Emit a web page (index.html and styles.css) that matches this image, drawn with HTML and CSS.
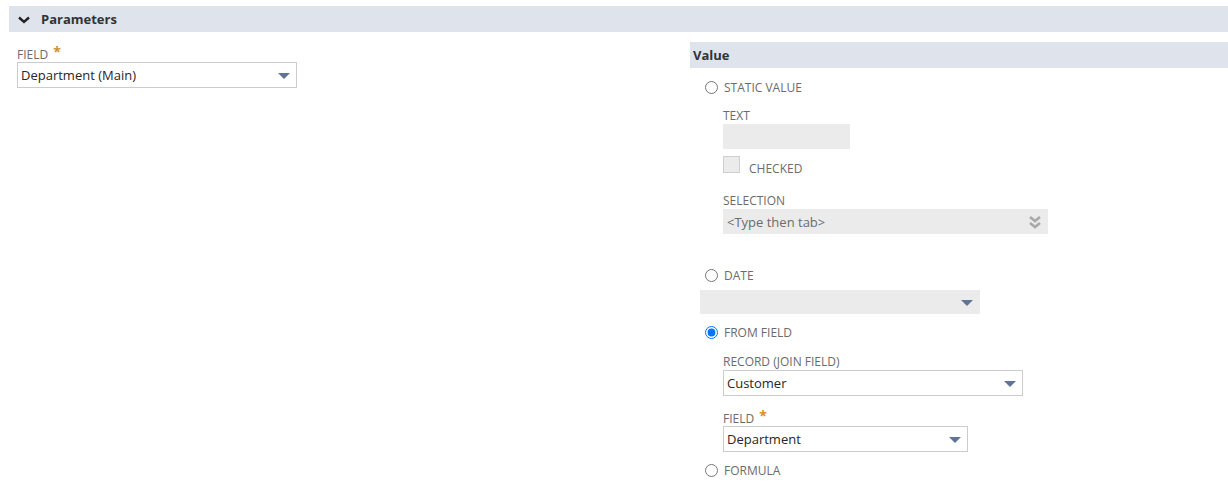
FILE: index.html
```html
<!DOCTYPE html>
<html>
<head>
<meta charset="utf-8">
<link rel="stylesheet" href="styles.css">
</head>
<body>
<div class="section-head">
  <svg class="chev" width="14" height="10" viewBox="0 0 14 10"><polyline points="2,2.5 7,7 12,2.5" fill="none" stroke="#222" stroke-width="2.4"/></svg>
  <span>Parameters</span>
</div>
<div class="content">
  <div class="left">
    <div class="label lbl-first">FIELD <span class="req">*</span></div>
    <div class="select sel-main"><span>Department (Main)</span><i class="tri"></i></div>
  </div>
  <div class="right">
    <div class="value-head">Value</div>

    <label class="radio-row r-static"><input type="radio" name="v"><span>STATIC VALUE</span></label>
    <div class="sub">
      <div class="label l-text">TEXT</div>
      <div class="box text-box"></div>
      <div class="check-row"><span class="checkbox"></span><span class="check-label">CHECKED</span></div>
      <div class="label l-sel">SELECTION</div>
      <div class="box sel-box"><span class="ph">&lt;Type then tab&gt;</span>
        <svg width="14" height="16" viewBox="0 0 14 16"><polyline points="2,3 7,7 12,3" fill="none" stroke="#a9a9a9" stroke-width="2.6"/><polyline points="2,9 7,13 12,9" fill="none" stroke="#a9a9a9" stroke-width="2.6"/></svg>
      </div>
    </div>

    <label class="radio-row r-date"><input type="radio" name="v"><span>DATE</span></label>
    <div class="box date-box"><i class="tri"></i></div>

    <label class="radio-row r-from"><input type="radio" name="v" checked><span>FROM FIELD</span></label>
    <div class="sub">
      <div class="label l-rec">RECORD (JOIN FIELD)</div>
      <div class="select sel-rec"><span>Customer</span><i class="tri"></i></div>
      <div class="label l-fld">FIELD <span class="req">*</span></div>
      <div class="select sel-fld"><span>Department</span><i class="tri"></i></div>
    </div>

    <label class="radio-row r-formula"><input type="radio" name="v"><span>FORMULA</span></label>
  </div>
</div>
</body>
</html>
```

FILE: styles.css
```css
* { box-sizing: border-box; }
body {
  margin: 0;
  font-family: "Open Sans", "Liberation Sans", sans-serif;
  color: #262626;
  background: #fff;
}
.section-head {
  margin: 6px 0 0 9px;
  height: 26px;
  background: #dfe3eb;
  display: flex;
  align-items: center;
  font-size: 13px;
  font-weight: 700;
  color: #333;
}
.chev { margin-left: 8px; margin-right: 10px; margin-top: 1px; }
.content { display: flex; }
.left { width: 690px; padding-left: 17px; }
.right { flex: 1; }
.label {
  font-size: 12px;
  line-height: 16px;
  height: 16px;
  padding-top: 1px;
  color: #6b6b6b;
}
.req { color: #d0902a; font-weight: 700; font-size: 14px; position: relative; top: -2px; margin-left: 2px; }
.lbl-first { margin-top: 13px; }
.select {
  height: 26px;
  border: 1px solid #cccccc;
  background: #fff;
  display: flex;
  align-items: center;
  justify-content: space-between;
  padding: 0 6px 0 3px;
  font-size: 13px;
  color: #262626;
  margin-top: 1px;
}
.tri {
  width: 0; height: 0;
  border-left: 6px solid transparent;
  border-right: 6px solid transparent;
  border-top: 6px solid #607594;
  margin-top: 1px;
}
.sel-main { width: 280px; }
.value-head {
  margin-top: 10px;
  height: 26px;
  background: #dfe3eb;
  font-size: 13px;
  font-weight: 700;
  color: #333;
  line-height: 26px;
  padding-left: 3px;
}
.radio-row {
  display: flex;
  align-items: center;
  height: 18px;
  padding-left: 15px;
  font-size: 12px;
  color: #6b6b6b;
}
.radio-row span { padding-top: 1px; }
.radio-row input { margin: 0 6px 0 0; width: 13px; height: 13px; }
.r-static { margin-top: 10px; }
.r-date { margin-top: 32px; }
.r-from { margin-top: 9px; }
.r-formula { margin-top: 9px; }
.sub { padding-left: 33px; }
.l-text { margin-top: 11px; }
.box { background: #ebebeb; margin-top: 1px; }
.text-box { width: 127px; height: 25px; }
.check-row { display: flex; margin-top: 7px; height: 17px; }
.checkbox { width: 17px; height: 17px; background: #ebebeb; border: 1px solid #cfcfcf; }
.check-label { font-size: 12px; line-height: 16px; color: #6b6b6b; margin-left: 9px; margin-top: 5px; }
.l-sel { margin-top: 19px; }
.sel-box {
  width: 325px; height: 25px;
  display: flex; align-items: center; justify-content: space-between;
  padding: 0 6px 0 4px;
}
.ph { font-size: 13px; color: #6b6b6b; }
.date-box {
  margin: 6px 0 0 10px;
  width: 280px; height: 24px;
  display: flex; align-items: center; justify-content: flex-end;
  padding-right: 7px;
}
.l-rec { margin-top: 12px; }
.sel-rec { width: 300px; }
.l-fld { margin-top: 13px; }
.sel-fld { width: 245px; }
```
